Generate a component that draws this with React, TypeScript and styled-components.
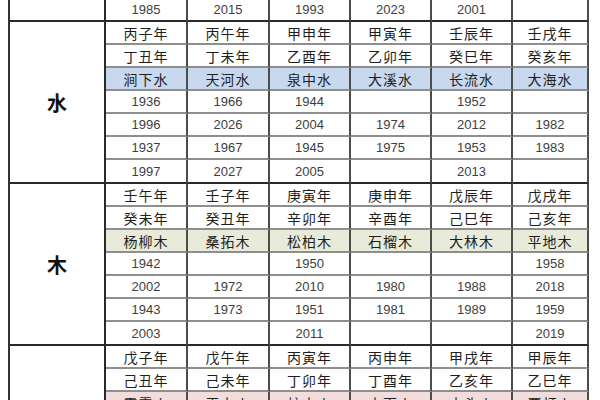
import React from "react";
import styled, { createGlobalStyle } from "styled-components";

const GlobalStyle = createGlobalStyle`
    html, body {
        margin: 0;
        padding: 0;
        background: #ffffff;
    }
`;

type Tone = "plain" | "water" | "wood" | "fire";

type Section = {
    label: string;
    tone: Tone;
    rows: string[][];
};

const tones: Record<Tone, string> = {
    plain: "#ffffff",
    water: "#c8d8ee",
    wood: "#e9ebda",
    fire: "#f3dddc",
};

// last visible row of the previous (metal) block
const metalTail = ["1985", "2015", "1993", "2023", "2001", ""];

const sections: Section[] = [
    {
        label: "水",
        tone: "water",
        rows: [
            ["丙子年", "丙午年", "甲申年", "甲寅年", "壬辰年", "壬戌年"],
            ["丁丑年", "丁未年", "乙酉年", "乙卯年", "癸巳年", "癸亥年"],
            ["涧下水", "天河水", "泉中水", "大溪水", "长流水", "大海水"],
            ["1936", "1966", "1944", "", "1952", ""],
            ["1996", "2026", "2004", "1974", "2012", "1982"],
            ["1937", "1967", "1945", "1975", "1953", "1983"],
            ["1997", "2027", "2005", "", "2013", ""],
        ],
    },
    {
        label: "木",
        tone: "wood",
        rows: [
            ["壬午年", "壬子年", "庚寅年", "庚申年", "戊辰年", "戊戌年"],
            ["癸未年", "癸丑年", "辛卯年", "辛酉年", "己巳年", "己亥年"],
            ["杨柳木", "桑拓木", "松柏木", "石榴木", "大林木", "平地木"],
            ["1942", "", "1950", "", "", "1958"],
            ["2002", "1972", "2010", "1980", "1988", "2018"],
            ["1943", "1973", "1951", "1981", "1989", "1959"],
            ["2003", "", "2011", "", "", "2019"],
        ],
    },
    {
        label: "火",
        tone: "fire",
        rows: [
            ["戊子年", "戊午年", "丙寅年", "丙申年", "甲戌年", "甲辰年"],
            ["己丑年", "己未年", "丁卯年", "丁酉年", "乙亥年", "乙巳年"],
            ["霹雳火", "天上火", "炉中火", "山下火", "山头火", "覆灯火"],
            ["1926", "1978", "1986", "1956", "1934", "1964"],
            ["1987", "2038", "2046", "2016", "1994", "2024"],
            ["1927", "1979", "1987", "1957", "1935", "1965"],
            ["1988", "2039", "2047", "2017", "1995", "2025"],
        ],
    },
];

const colWidths = [96, 82, 82, 81, 81, 81, 76];

const Page = styled.div`
    width: 600px;
    height: 400px;
    overflow: hidden;
    padding-left: 8px;
    box-sizing: border-box;
`;

const Table = styled.table`
    border-collapse: separate;
    border-spacing: 0;
    margin-top: -2px;
    table-layout: fixed;
    border-left: 2px solid #333;
`;

const Row = styled.tr<{ $tone: Tone }>`
    background: ${(p) => tones[p.$tone]};
`;

const Cell = styled.td<{ $end?: boolean; $digits?: boolean }>`
    box-sizing: border-box;
    height: ${(p) => (p.$end ? "24px" : "23px")};
    padding: 0;
    text-align: center;
    vertical-align: middle;
    white-space: nowrap;
    border-right: 2px solid #4c4c4c;
    border-bottom: ${(p) => (p.$end ? "2px solid #2a2a2a" : "2px solid #8e8e8e")};
    font-family: ${(p) =>
        p.$digits
            ? `"Liberation Sans", "DejaVu Sans", sans-serif`
            : `"Noto Sans CJK SC", "Noto Sans", sans-serif`};
    font-size: ${(p) => (p.$digits ? "13px" : "14px")};
    letter-spacing: ${(p) => (p.$digits ? "0" : "1px")};
    color: ${(p) => (p.$digits ? "#3e3e3e" : "#1e1e1e")};
    line-height: 1;
`;

const Label = styled.td`
    box-sizing: border-box;
    padding: 0;
    text-align: center;
    vertical-align: middle;
    background: #ffffff;
    border-right: 2px solid #2a2a2a;
    border-bottom: 2px solid #2a2a2a;
    font-family: "Noto Sans CJK SC", "Noto Sans", sans-serif;
    font-size: 20px;
    font-weight: 700;
    color: #111;
`;

const isDigits = (s: string) => /^\d*$/.test(s);

const App = () => {
    return (
        <>
            <GlobalStyle />
            <Page>
                <Table>
                    <colgroup>
                        {colWidths.map((w, i) => (
                            <col key={i} style={{ width: w }} />
                        ))}
                    </colgroup>
                    <tbody>
                        <Row $tone="plain">
                            <Label />
                            {metalTail.map((v, i) => (
                                <Cell key={i} $end $digits>
                                    {v}
                                </Cell>
                            ))}
                        </Row>
                        {sections.map((sec) =>
                            sec.rows.map((row, r) => (
                                <Row key={sec.label + r} $tone={r === 2 ? sec.tone : "plain"}>
                                    {r === 0 && <Label rowSpan={sec.rows.length}>{sec.label}</Label>}
                                    {row.map((v, i) => (
                                        <Cell
                                            key={i}
                                            $end={r === sec.rows.length - 1}
                                            $digits={isDigits(v)}
                                        >
                                            {v}
                                        </Cell>
                                    ))}
                                </Row>
                            ))
                        )}
                    </tbody>
                </Table>
            </Page>
        </>
    );
};

export default App;
